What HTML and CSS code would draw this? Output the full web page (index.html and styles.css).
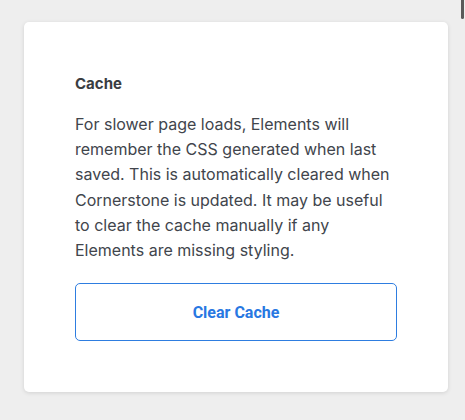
FILE: index.html
```html
<!DOCTYPE html>
<html>
<head>
<meta charset="utf-8">
<link rel="stylesheet" href="styles.css">
</head>
<body>
<div class="scroll-thumb"></div>
<main class="page">
  <section class="card">
    <h2 class="card-title">Cache</h2>
    <p class="card-text">For slower page loads, Elements will remember the CSS generated when last saved. This is automatically cleared when Cornerstone is updated. It may be useful to clear the cache manually if any Elements are missing styling.</p>
    <button class="btn-outline" type="button">Clear Cache</button>
  </section>
</main>
</body>
</html>
```

FILE: styles.css
```css
html, body {
  margin: 0;
  padding: 0;
}
body {
  background: #eeeeee;
  font-family: Inter, Roboto, "Liberation Sans", sans-serif;
  width: 465px;
  height: 420px;
  overflow: hidden;
  position: relative;
}
.scroll-thumb {
  position: absolute;
  top: 0;
  right: 1px;
  width: 3px;
  height: 19px;
  background: #5a5a5a;
  border-radius: 0 0 2px 2px;
}
.page {
  padding: 22px 17px 0 24px;
}
.card {
  box-sizing: border-box;
  width: 424px;
  height: 370px;
  background: #ffffff;
  border-radius: 5px;
  box-shadow: 0 1px 4px rgba(0, 0, 0, 0.12);
  padding: 51px;
  display: flex;
  flex-direction: column;
}
.card-title {
  margin: 0;
  font-size: 15px;
  line-height: 21px;
  font-weight: 700;
  color: #3a3d42;
}
.card-text {
  margin: 18px 0 0;
  font-size: 16px;
  line-height: 25.2px;
  font-weight: 400;
  color: #41454c;
}
.btn-outline {
  margin-top: 20px;
  height: 59px;
  width: 100%;
  background: #ffffff;
  border: 1px solid #2e7de0;
  border-radius: 5px;
  color: #2878e2;
  font-family: Roboto, "Liberation Sans", sans-serif;
  font-size: 16px;
  font-weight: 700;
  cursor: pointer;
}
```
